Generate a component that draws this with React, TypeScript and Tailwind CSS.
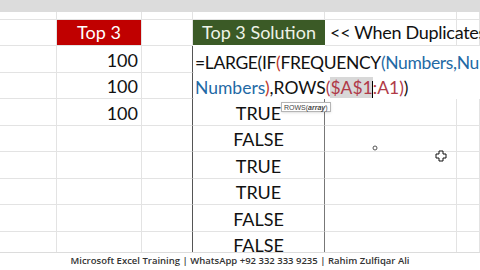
import React from 'react';

const cols = ['w-[57px]', 'w-[85px]', 'w-[51px]', 'w-[132px]', 'w-[132px]', 'flex-1'];

const dataRows: { h: string; num?: string; bool?: string }[] = [
	{ h: 'h-[27px]', num: '100' },
	{ h: 'h-[26px]', num: '100' },
	{ h: 'h-[27px]', num: '100', bool: 'TRUE' },
	{ h: 'h-[26px]', bool: 'FALSE' },
	{ h: 'h-[27px]', bool: 'TRUE' },
	{ h: 'h-[26px]', bool: 'TRUE' },
	{ h: 'h-[27px]', bool: 'FALSE' },
	{ h: 'h-[26px]', bool: 'FALSE' },
];

const Cell: React.FC<{ w: string; className?: string; children?: React.ReactNode }> = ({ w, className = '', children }) => (
	<div className={`${w} shrink-0 h-full border-r border-b border-[#e3e3e3] flex items-center ${className}`}>{children}</div>
);

const App: React.FC = () => {
	return (
		<div className="relative w-[480px] h-[270px] overflow-hidden bg-white flex flex-col font-['Lato','Liberation_Sans',sans-serif] text-[18px] text-[#111]">
			{/* Top bar */}
			<div className="h-[12px] shrink-0 bg-[#dcdcdc]" />

			{/* Sheet grid */}
			<div className="flex-1 overflow-hidden flex flex-col">
				<div className="h-[8px] shrink-0 flex">
					{cols.map((w, i) => (
						<Cell key={i} w={w} />
					))}
				</div>

				{/* Header row */}
				<div className="h-[26px] shrink-0 flex">
					<Cell w={cols[0]} />
					<Cell w={cols[1]} className="justify-center bg-[#c00000] text-white border-[#c00000]">
						Top 3
					</Cell>
					<Cell w={cols[2]} />
					<div className="w-[132px] shrink-0 h-[25px] bg-[#3b5a26] text-[#eef3e6] flex items-center justify-center">
						Top 3 Solution
					</div>
					<Cell w={cols[4]} className="overflow-visible whitespace-nowrap pl-[5px] z-10 tracking-[-0.3px]">
						&lt;&lt; When Duplicates
					</Cell>
					<Cell w={cols[5]} />
				</div>

				{dataRows.map((r, i) => (
					<div key={i} className={`${r.h} shrink-0 flex`}>
						<Cell w={cols[0]} />
						<Cell w={cols[1]} className="justify-end pr-[3px] pt-[2px]">
							{r.num}
						</Cell>
						<div className="w-[51px] shrink-0 h-full border-b border-[#e3e3e3] border-r border-r-[#555]" />
						<div className="w-[132px] shrink-0 h-full border-b border-[#e3e3e3] border-r border-r-[#777] flex items-center justify-center pt-[2px]">
							{r.bool}
						</div>
						<Cell w={cols[4]} />
						<Cell w={cols[5]} />
					</div>
				))}
			</div>

			{/* Footer watermark */}
			<div className="h-[18px] shrink-0 bg-white border-t border-[#dcdcdc] flex items-center justify-center font-['Open_Sans',sans-serif] text-[9.5px] font-semibold text-[#333]">
				Microsoft Excel Training | WhatsApp +92 332 333 9235 | Rahim Zulfiqar Ali
			</div>

			{/* Formula being edited in cell */}
			<div className="absolute left-[194px] top-[46px] w-[286px] h-[53px] bg-white pt-[4px] pl-[1px] whitespace-nowrap leading-[25px] text-[17.5px]">
				<div className="tracking-[-0.35px]">
					=LARGE(IF<span className="text-[#c0392b]">(</span>FREQUENCY<span className="text-[#1f6aa5]">(Numbers,Nu</span>
				</div>
				<div>
					<span className="text-[#1f6aa5]">Numbers</span>
					<span className="text-[#c0392b]">)</span>,ROWS<span className="text-[#b03a48]">(</span>
					<span className="text-[#b03a48] bg-[#d8d8d8]">$A$1</span>
					<span className="inline-block w-px h-[17px] bg-black align-middle -ml-px" />
					<span className="text-[#b03a48]">:A1)</span>)
				</div>
			</div>

			{/* Function tooltip */}
			<div className="absolute left-[281px] top-[102px] h-[10px] px-[2px] border border-[#b5b5b5] bg-white shadow-sm flex items-center font-['Liberation_Sans',sans-serif] text-[7px] leading-none text-[#444]">
				ROWS(<span className="font-bold italic">array</span>)
			</div>

			{/* Mouse cursors */}
			<svg className="absolute left-[372px] top-[145px]" width="6" height="6" viewBox="0 0 6 6">
				<circle cx="3" cy="3" r="2" fill="white" stroke="#555" strokeWidth="1" />
			</svg>
			<svg className="absolute left-[435px] top-[150px]" width="12" height="12" viewBox="0 0 12 12">
				<path d="M4 1h4v3h3v4h-3v3h-4v-3h-3v-4h3z" fill="white" stroke="#111" strokeWidth="1" />
			</svg>
		</div>
	);
};

export default App;
